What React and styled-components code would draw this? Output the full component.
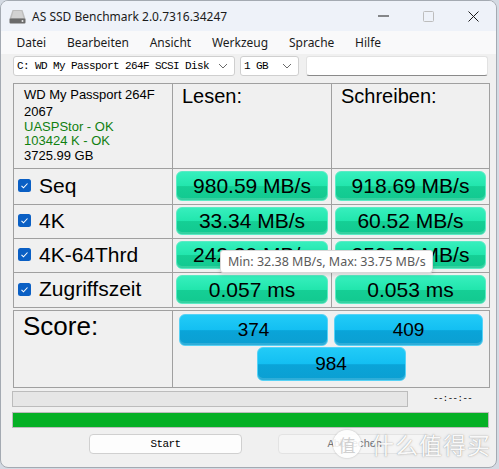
import { Fragment } from "react";
import styled, { createGlobalStyle } from "styled-components";

const GlobalStyle = createGlobalStyle`
  html, body {
    margin: 0;
    padding: 0;
    background: #d4dae3;
  }
  body {
    width: 499px;
    height: 469px;
    overflow: hidden;
    font-family: "Liberation Sans", Arial, sans-serif;
  }
`;

const Window = styled.div`
  position: relative;
  width: 495px;
  height: 466px;
  background: #f0f0f0;
  border: 1px solid #a4aab2;
  border-radius: 8px;
  overflow: hidden;
  display: flex;
  flex-direction: column;
`;

const TitleBar = styled.div`
  height: 30px;
  background: #eef2f9;
  display: flex;
  align-items: center;
  padding-left: 8px;
`;

const Title = styled.span`
  margin-left: 6px;
  font-family: "Noto Sans", "Open Sans", sans-serif;
  font-size: 12px;
  color: #1b1b1b;
  flex: 1;
`;

const WinButton = styled.div`
  width: 45px;
  height: 30px;
  display: flex;
  align-items: center;
  justify-content: center;
`;

const MenuBar = styled.div`
  height: 23px;
  background: #f9f9fa;
  display: flex;
  align-items: center;
  padding-left: 5px;
`;

const MenuItem = styled.span`
  padding: 0 10.4px;
  font-family: "Noto Sans", "Open Sans", sans-serif;
  font-size: 12px;
  color: #1b1b1b;
`;

const Toolbar = styled.div`
  display: flex;
  align-items: center;
  gap: 5px;
  padding: 1px 0 0 12px;
  height: 21px;
`;

const Combo = styled.div`
  width: ${(p) => p.$w}px;
  height: 20px;
  box-sizing: border-box;
  background: #fff;
  border: 1px solid #cfcfcf;
  border-radius: 3px;
  display: flex;
  align-items: center;
  justify-content: space-between;
  padding: 0 6px 0 3px;
  font-family: "Liberation Mono", "DejaVu Sans Mono", monospace;
  font-size: 11px;
  letter-spacing: -0.6px;
  color: #000;
`;

const TextField = styled.div`
  width: 182px;
  height: 20px;
  margin-left: 2px;
  box-sizing: border-box;
  background: #fff;
  border: 1px solid #e2e2e2;
  border-bottom: 1px solid #8a8a8a;
  border-radius: 3px;
`;

const Board = styled.div`
  margin: 7px 0 0 12px;
  width: 476px;
  display: grid;
  grid-template-columns: 159px 159px 158px;
  border-top: 1px solid #a0a0a0;
  border-left: 1px solid #a0a0a0;
`;

const Cell = styled.div`
  box-sizing: border-box;
  height: ${(p) => p.$h}px;
  border-right: 1px solid #a0a0a0;
  border-bottom: 1px solid #a0a0a0;
  display: flex;
`;

const InfoCell = styled(Cell)`
  flex-direction: column;
  padding: 3px 0 0 10px;
  font-size: 13px;
  color: #000;
`;

const InfoLine = styled.div`
  line-height: ${(p) => (p.$first ? 15 : 14.5)}px;
  white-space: nowrap;
  color: ${(p) => (p.$ok ? "#108010" : "#000")};
  margin-top: ${(p) => p.$gap || 0}px;
`;

const Heading = styled.div`
  padding: 1px 0 0 9px;
  font-size: 20px;
  line-height: 23px;
  color: #000;
`;

const LabelCell = styled(Cell)`
  align-items: center;
  padding: 0 0 2px 4px;
  gap: 8px;
  font-size: 21px;
  color: #000;
`;

const TileCell = styled(Cell)`
  padding: 2px 3px 3px 3px;
`;

const Tile = styled.div`
  flex: 1;
  box-sizing: border-box;
  border-radius: 6px;
  display: flex;
  align-items: center;
  justify-content: center;
  font-size: ${(p) => (p.$blue ? 19 : 21)}px;
  color: #000;
  border: 1px solid ${(p) => (p.$blue ? "#56d2f6" : "#5aebc4")};
  background: ${(p) =>
    p.$blue
      ? "linear-gradient(#22cbf7 0%, #13bff2 50%, #0aa4d8 52%, #0b9fd2 100%)"
      : "linear-gradient(#36efbd 0%, #22e6ad 50%, #15cf95 52%, #12c990 100%)"};
  box-shadow: inset 0 -2px 0 rgba(255, 255, 255, 0.15);
`;

const ScoreBoard = styled.div`
  margin: 2px 0 0 12px;
  width: 476px;
  display: grid;
  grid-template-columns: 159px 317px;
  border-top: 1px solid #a0a0a0;
  border-left: 1px solid #a0a0a0;
`;

const ScoreLabel = styled(Cell)`
  padding: 0 0 0 9px;
  font-size: 26px;
  line-height: 30px;
`;

const ScoreTiles = styled(Cell)`
  display: grid;
  grid-template-columns: 149px 149px;
  grid-template-rows: 32px 34px;
  column-gap: 6px;
  row-gap: 1px;
  padding: 3px 0 0 6px;
  align-content: start;
`;

const TotalTile = styled(Tile)`
  grid-column: 1 / span 2;
  justify-self: center;
  width: 149px;
`;

const ProgressRow = styled.div`
  display: flex;
  align-items: center;
  margin: 3px 0 0 11px;
  gap: 25px;
`;

const Bar = styled.div`
  box-sizing: border-box;
  width: ${(p) => p.$w}px;
  height: ${(p) => p.$h}px;
  border: 1px solid #bcbcbc;
  background: ${(p) => p.$fill};
`;

const TimeText = styled.span`
  font-family: "Liberation Mono", monospace;
  font-size: 9px;
  letter-spacing: -0.5px;
  color: #000;
`;

const GreenBar = styled(Bar)`
  margin: 5px 0 0 11px;
`;

const ButtonRow = styled.div`
  display: flex;
  gap: 36px;
  margin: 6px 0 0 88px;
`;

const Button = styled.div`
  width: 153px;
  height: 20px;
  box-sizing: border-box;
  border-radius: 4px;
  border: 1px solid ${(p) => (p.$disabled ? "#e3e3e3" : "#d0d0d0")};
  background: ${(p) => (p.$disabled ? "#f5f5f5" : "#fdfdfd")};
  color: ${(p) => (p.$disabled ? "#777" : "#000")};
  display: flex;
  align-items: center;
  justify-content: center;
  font-family: "Liberation Mono", monospace;
  font-size: 11px;
  letter-spacing: -0.6px;
`;

const Tooltip = styled.div`
  position: absolute;
  left: 219px;
  top: 249px;
  width: 213px;
  height: 23px;
  box-sizing: border-box;
  background: #fff;
  border: 1px solid #d8d8d8;
  border-radius: 3px;
  box-shadow: 0 2px 4px rgba(0, 0, 0, 0.12);
  display: flex;
  align-items: center;
  padding-left: 7px;
  font-family: "Noto Sans", "Open Sans", sans-serif;
  font-size: 12.5px;
  color: #5a5a5a;
  white-space: nowrap;
`;

const Watermark = styled.div`
  position: absolute;
  left: 332px;
  top: 426px;
  display: flex;
  align-items: center;
  gap: 10px;
  font-family: "Noto Sans CJK SC", sans-serif;
  color: rgba(255, 255, 255, 0.95);
  text-shadow: 0 0 1px rgba(0, 0, 0, 0.35), 0 0 3px rgba(0, 0, 0, 0.15);
  pointer-events: none;
`;

const WatermarkBadge = styled.div`
  width: 28px;
  height: 28px;
  border-radius: 50%;
  background: rgba(255, 255, 255, 0.85);
  box-shadow: 0 0 2px rgba(0, 0, 0, 0.25);
  display: flex;
  align-items: center;
  justify-content: center;
  font-size: 17px;
  color: #d0d0d0;
  text-shadow: none;
`;

const WatermarkText = styled.span`
  font-size: 23px;
  letter-spacing: 1px;
`;

function DriveIcon() {
  return (
    <svg width="17" height="15" viewBox="0 0 17 15">
      <path d="M3.5 1h10l3 9h-16z" fill="#bdbdbd" />
      <path d="M4.5 2h8l2 7h-12z" fill="#d2d2d2" />
      <rect x="0.5" y="9.5" width="16" height="5" rx="1" fill="#6a6a6a" />
      <circle cx="13.5" cy="12" r="1" fill="#e8e8e8" />
    </svg>
  );
}

function Chevron() {
  return (
    <svg width="10" height="6" viewBox="0 0 10 6">
      <path d="M1 1l4 4 4-4" fill="none" stroke="#6a6a6a" strokeWidth="1" />
    </svg>
  );
}

function Check() {
  return (
    <svg width="13" height="13" viewBox="0 0 13 13">
      <rect x="0" y="0" width="13" height="13" rx="2.5" fill="#0a5fc4" />
      <path d="M3.5 6.8l2 2 4-4.3" fill="none" stroke="#fff" strokeWidth="1.1" />
    </svg>
  );
}

const rows = [
  { name: "Seq", h: 36, read: "980.59 MB/s", write: "918.69 MB/s" },
  { name: "4K", h: 34, read: "33.34 MB/s", write: "60.52 MB/s" },
  { name: "4K-64Thrd", h: 34, read: "242.30 MB/s", write: "259.76 MB/s" },
  { name: "Zugriffszeit", h: 35, read: "0.057 ms", write: "0.053 ms" },
];

const menu = ["Datei", "Bearbeiten", "Ansicht", "Werkzeug", "Sprache", "Hilfe"];

export default function App() {
  return (
    <>
      <GlobalStyle />
      <Window>
        <TitleBar>
          <DriveIcon />
          <Title>AS SSD Benchmark 2.0.7316.34247</Title>
          <WinButton>
            <svg width="11" height="2"><rect width="11" height="1" y="0.5" fill="#1b1b1b" /></svg>
          </WinButton>
          <WinButton>
            <svg width="11" height="11">
              <rect x="0.5" y="0.5" width="10" height="10" rx="1" fill="none" stroke="#bdbdbd" />
            </svg>
          </WinButton>
          <WinButton>
            <svg width="11" height="11">
              <path d="M0.5 0.5l10 10M10.5 0.5l-10 10" stroke="#1b1b1b" strokeWidth="1" />
            </svg>
          </WinButton>
        </TitleBar>

        <MenuBar>
          {menu.map((m) => (
            <MenuItem key={m}>{m}</MenuItem>
          ))}
        </MenuBar>

        <Toolbar>
          <Combo $w={222}>
            <span>C: WD My Passport 264F SCSI Disk</span>
            <Chevron />
          </Combo>
          <Combo $w={59}>
            <span>1 GB</span>
            <Chevron />
          </Combo>
          <TextField />
        </Toolbar>

        <Board>
          <InfoCell $h={85}>
            <InfoLine $first>WD My Passport 264F</InfoLine>
            <InfoLine $gap={3}>2067</InfoLine>
            <InfoLine $ok>UASPStor - OK</InfoLine>
            <InfoLine $ok>103424 K - OK</InfoLine>
            <InfoLine>3725.99 GB</InfoLine>
          </InfoCell>
          <Cell $h={85}>
            <Heading>Lesen:</Heading>
          </Cell>
          <Cell $h={85}>
            <Heading>Schreiben:</Heading>
          </Cell>

          {rows.map((r) => (
            <Fragment key={r.name}>
              <LabelCell $h={r.h}>
                <Check />
                <span>{r.name}</span>
              </LabelCell>
              <TileCell $h={r.h}>
                <Tile>{r.read}</Tile>
              </TileCell>
              <TileCell $h={r.h}>
                <Tile>{r.write}</Tile>
              </TileCell>
            </Fragment>
          ))}
        </Board>

        <ScoreBoard>
          <ScoreLabel $h={77}>Score:</ScoreLabel>
          <ScoreTiles $h={77}>
            <Tile $blue>374</Tile>
            <Tile $blue>409</Tile>
            <TotalTile $blue>984</TotalTile>
          </ScoreTiles>
        </ScoreBoard>

        <ProgressRow>
          <Bar $w={396} $h={16} $fill="#e6e6e6" />
          <TimeText>--:--:--</TimeText>
        </ProgressRow>

        <GreenBar $w={477} $h={16} $fill="#06b025" />

        <ButtonRow>
          <Button>Start</Button>
          <Button $disabled>Abbrechen</Button>
        </ButtonRow>

        <Tooltip>Min: 32.38 MB/s, Max: 33.75 MB/s</Tooltip>

        <Watermark>
          <WatermarkBadge>值</WatermarkBadge>
          <WatermarkText>什么值得买</WatermarkText>
        </Watermark>
      </Window>
    </>
  );
}
